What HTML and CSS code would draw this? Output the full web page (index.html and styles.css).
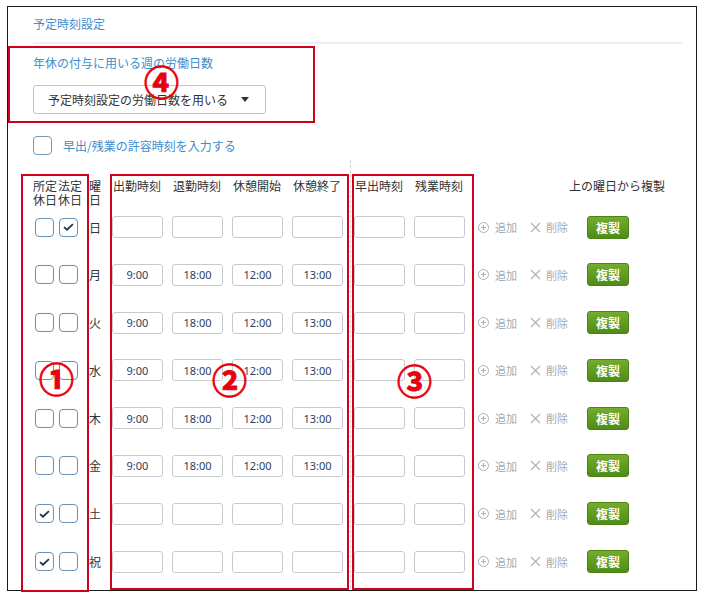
FILE: index.html
```html
<!DOCTYPE html>
<html lang="ja">
<head>
    <meta charset="UTF-8">
    <meta name="viewport" content="width=device-width, initial-scale=1.0">
    <title>予定時刻設定</title>
    <link rel="stylesheet" href="styles.css">
</head>
<body>
    <div class="page">
        <div class="frame">
            <section class="schedule">
                <h2 class="section-title">予定時刻設定</h2>

                <p class="field-label">年休の付与に用いる週の労働日数</p>
                <div class="select-box">
                    <span>予定時刻設定の労働日数を用いる</span>
                    <span class="caret"></span>
                </div>

                <label class="allow-check">
                    <span class="cb cb-large"></span>
                    <span>早出/残業の許容時刻を入力する</span>
                </label>

                <!-- Weekly schedule table -->
                <div class="week-table">
                    <div class="week-head">
                        <div class="c-off"><span class="head-wrap">所定休日</span></div>
                        <div class="c-legal"><span class="head-wrap">法定休日</span></div>
                        <div class="c-day"><span class="head-day">曜日</span></div>
                        <div class="c-time">出勤時刻</div>
                        <div class="c-time">退勤時刻</div>
                        <div class="c-time">休憩開始</div>
                        <div class="c-time">休憩終了</div>
                        <div class="c-time c-extra">早出時刻</div>
                        <div class="c-time">残業時刻</div>
                        <div class="c-copy">上の曜日から複製</div>
                    </div>

                    <div class="week-rows">
                        <div class="week-row">
                            <div class="c-off"><span class="cb"></span></div>
                            <div class="c-legal"><span class="cb checked"><svg width="11" height="8" viewBox="0 0 12 9"><path d="M1 4.6l3.3 3L11 1.2" fill="none" stroke="#243447" stroke-width="2"/></svg></span></div>
                            <div class="c-day">日</div>
                            <div class="c-time"><input type="text" value=""></div>
                            <div class="c-time"><input type="text" value=""></div>
                            <div class="c-time"><input type="text" value=""></div>
                            <div class="c-time"><input type="text" value=""></div>
                            <div class="c-time c-extra"><input type="text" value=""></div>
                            <div class="c-time"><input type="text" value=""></div>
                            <div class="actions">
                                <span class="act act-add"><svg width="11" height="11" viewBox="0 0 11 11"><circle cx="5.5" cy="5.5" r="5" fill="none" stroke="#a9b0b7"/><path d="M5.5 3v5M3 5.5h5" stroke="#a9b0b7"/></svg>追加</span>
                                <span class="act act-del"><svg width="11" height="11" viewBox="0 0 11 11"><path d="M1 1l9 9M10 1l-9 9" stroke="#a9b0b7" stroke-width="1.1"/></svg>削除</span>
                                <button class="copy-btn">複製</button>
                            </div>
                        </div>

                        <div class="week-row">
                            <div class="c-off"><span class="cb"></span></div>
                            <div class="c-legal"><span class="cb"></span></div>
                            <div class="c-day">月</div>
                            <div class="c-time"><input type="text" value="9:00"></div>
                            <div class="c-time"><input type="text" value="18:00"></div>
                            <div class="c-time"><input type="text" value="12:00"></div>
                            <div class="c-time"><input type="text" value="13:00"></div>
                            <div class="c-time c-extra"><input type="text" value=""></div>
                            <div class="c-time"><input type="text" value=""></div>
                            <div class="actions">
                                <span class="act act-add"><svg width="11" height="11" viewBox="0 0 11 11"><circle cx="5.5" cy="5.5" r="5" fill="none" stroke="#a9b0b7"/><path d="M5.5 3v5M3 5.5h5" stroke="#a9b0b7"/></svg>追加</span>
                                <span class="act act-del"><svg width="11" height="11" viewBox="0 0 11 11"><path d="M1 1l9 9M10 1l-9 9" stroke="#a9b0b7" stroke-width="1.1"/></svg>削除</span>
                                <button class="copy-btn">複製</button>
                            </div>
                        </div>

                        <div class="week-row">
                            <div class="c-off"><span class="cb"></span></div>
                            <div class="c-legal"><span class="cb"></span></div>
                            <div class="c-day">火</div>
                            <div class="c-time"><input type="text" value="9:00"></div>
                            <div class="c-time"><input type="text" value="18:00"></div>
                            <div class="c-time"><input type="text" value="12:00"></div>
                            <div class="c-time"><input type="text" value="13:00"></div>
                            <div class="c-time c-extra"><input type="text" value=""></div>
                            <div class="c-time"><input type="text" value=""></div>
                            <div class="actions">
                                <span class="act act-add"><svg width="11" height="11" viewBox="0 0 11 11"><circle cx="5.5" cy="5.5" r="5" fill="none" stroke="#a9b0b7"/><path d="M5.5 3v5M3 5.5h5" stroke="#a9b0b7"/></svg>追加</span>
                                <span class="act act-del"><svg width="11" height="11" viewBox="0 0 11 11"><path d="M1 1l9 9M10 1l-9 9" stroke="#a9b0b7" stroke-width="1.1"/></svg>削除</span>
                                <button class="copy-btn">複製</button>
                            </div>
                        </div>

                        <div class="week-row">
                            <div class="c-off"><span class="cb"></span></div>
                            <div class="c-legal"><span class="cb"></span></div>
                            <div class="c-day">水</div>
                            <div class="c-time"><input type="text" value="9:00"></div>
                            <div class="c-time"><input type="text" value="18:00"></div>
                            <div class="c-time"><input type="text" value="12:00"></div>
                            <div class="c-time"><input type="text" value="13:00"></div>
                            <div class="c-time c-extra"><input type="text" value=""></div>
                            <div class="c-time"><input type="text" value=""></div>
                            <div class="actions">
                                <span class="act act-add"><svg width="11" height="11" viewBox="0 0 11 11"><circle cx="5.5" cy="5.5" r="5" fill="none" stroke="#a9b0b7"/><path d="M5.5 3v5M3 5.5h5" stroke="#a9b0b7"/></svg>追加</span>
                                <span class="act act-del"><svg width="11" height="11" viewBox="0 0 11 11"><path d="M1 1l9 9M10 1l-9 9" stroke="#a9b0b7" stroke-width="1.1"/></svg>削除</span>
                                <button class="copy-btn">複製</button>
                            </div>
                        </div>

                        <div class="week-row">
                            <div class="c-off"><span class="cb"></span></div>
                            <div class="c-legal"><span class="cb"></span></div>
                            <div class="c-day">木</div>
                            <div class="c-time"><input type="text" value="9:00"></div>
                            <div class="c-time"><input type="text" value="18:00"></div>
                            <div class="c-time"><input type="text" value="12:00"></div>
                            <div class="c-time"><input type="text" value="13:00"></div>
                            <div class="c-time c-extra"><input type="text" value=""></div>
                            <div class="c-time"><input type="text" value=""></div>
                            <div class="actions">
                                <span class="act act-add"><svg width="11" height="11" viewBox="0 0 11 11"><circle cx="5.5" cy="5.5" r="5" fill="none" stroke="#a9b0b7"/><path d="M5.5 3v5M3 5.5h5" stroke="#a9b0b7"/></svg>追加</span>
                                <span class="act act-del"><svg width="11" height="11" viewBox="0 0 11 11"><path d="M1 1l9 9M10 1l-9 9" stroke="#a9b0b7" stroke-width="1.1"/></svg>削除</span>
                                <button class="copy-btn">複製</button>
                            </div>
                        </div>

                        <div class="week-row">
                            <div class="c-off"><span class="cb"></span></div>
                            <div class="c-legal"><span class="cb"></span></div>
                            <div class="c-day">金</div>
                            <div class="c-time"><input type="text" value="9:00"></div>
                            <div class="c-time"><input type="text" value="18:00"></div>
                            <div class="c-time"><input type="text" value="12:00"></div>
                            <div class="c-time"><input type="text" value="13:00"></div>
                            <div class="c-time c-extra"><input type="text" value=""></div>
                            <div class="c-time"><input type="text" value=""></div>
                            <div class="actions">
                                <span class="act act-add"><svg width="11" height="11" viewBox="0 0 11 11"><circle cx="5.5" cy="5.5" r="5" fill="none" stroke="#a9b0b7"/><path d="M5.5 3v5M3 5.5h5" stroke="#a9b0b7"/></svg>追加</span>
                                <span class="act act-del"><svg width="11" height="11" viewBox="0 0 11 11"><path d="M1 1l9 9M10 1l-9 9" stroke="#a9b0b7" stroke-width="1.1"/></svg>削除</span>
                                <button class="copy-btn">複製</button>
                            </div>
                        </div>

                        <div class="week-row">
                            <div class="c-off"><span class="cb checked"><svg width="11" height="8" viewBox="0 0 12 9"><path d="M1 4.6l3.3 3L11 1.2" fill="none" stroke="#243447" stroke-width="2"/></svg></span></div>
                            <div class="c-legal"><span class="cb"></span></div>
                            <div class="c-day">土</div>
                            <div class="c-time"><input type="text" value=""></div>
                            <div class="c-time"><input type="text" value=""></div>
                            <div class="c-time"><input type="text" value=""></div>
                            <div class="c-time"><input type="text" value=""></div>
                            <div class="c-time c-extra"><input type="text" value=""></div>
                            <div class="c-time"><input type="text" value=""></div>
                            <div class="actions">
                                <span class="act act-add"><svg width="11" height="11" viewBox="0 0 11 11"><circle cx="5.5" cy="5.5" r="5" fill="none" stroke="#a9b0b7"/><path d="M5.5 3v5M3 5.5h5" stroke="#a9b0b7"/></svg>追加</span>
                                <span class="act act-del"><svg width="11" height="11" viewBox="0 0 11 11"><path d="M1 1l9 9M10 1l-9 9" stroke="#a9b0b7" stroke-width="1.1"/></svg>削除</span>
                                <button class="copy-btn">複製</button>
                            </div>
                        </div>

                        <div class="week-row">
                            <div class="c-off"><span class="cb checked"><svg width="11" height="8" viewBox="0 0 12 9"><path d="M1 4.6l3.3 3L11 1.2" fill="none" stroke="#243447" stroke-width="2"/></svg></span></div>
                            <div class="c-legal"><span class="cb"></span></div>
                            <div class="c-day">祝</div>
                            <div class="c-time"><input type="text" value=""></div>
                            <div class="c-time"><input type="text" value=""></div>
                            <div class="c-time"><input type="text" value=""></div>
                            <div class="c-time"><input type="text" value=""></div>
                            <div class="c-time c-extra"><input type="text" value=""></div>
                            <div class="c-time"><input type="text" value=""></div>
                            <div class="actions">
                                <span class="act act-add"><svg width="11" height="11" viewBox="0 0 11 11"><circle cx="5.5" cy="5.5" r="5" fill="none" stroke="#a9b0b7"/><path d="M5.5 3v5M3 5.5h5" stroke="#a9b0b7"/></svg>追加</span>
                                <span class="act act-del"><svg width="11" height="11" viewBox="0 0 11 11"><path d="M1 1l9 9M10 1l-9 9" stroke="#a9b0b7" stroke-width="1.1"/></svg>削除</span>
                                <button class="copy-btn">複製</button>
                            </div>
                        </div>
                    </div>
                </div>
            </section>
        </div>

        <!-- Callout boxes and numbers drawn over the form -->
        <div class="mark mark-4"></div>
        <div class="mark mark-1"></div>
        <div class="mark mark-2"></div>
        <div class="mark mark-3"></div>
        <span class="num num-4">④</span>
        <span class="num num-1">①</span>
        <span class="num num-2">②</span>
        <span class="num num-3">③</span>
    </div>
</body>
</html>
```

FILE: styles.css
```css
/* Reset */
* {
    margin: 0;
    padding: 0;
    box-sizing: border-box;
}

body {
    font-family: "Noto Sans CJK JP", "Noto Sans", sans-serif;
    background: #fff;
    color: #333;
}

.page {
    position: relative;
    width: 705px;
    height: 600px;
    overflow: hidden;
}

.frame {
    margin: 6px 0 0 7px;
    width: 690px;
    height: 585px;
    border: 1px solid #1a1a1a;
    padding-left: 25px;
    overflow: hidden;
}

.schedule {
    width: 649px;
}

.section-title {
    font-size: 12px;
    font-weight: normal;
    line-height: 18px;
    color: #3d8dcc;
    padding: 8px 0 9px;
    border-bottom: 2px solid #eceff3;
}

.field-label {
    margin-top: 10px;
    font-size: 12px;
    line-height: 18px;
    color: #3d8dcc;
}

.select-box {
    margin-top: 13px;
    width: 233px;
    height: 29px;
    border: 1px solid #b9c6d3;
    border-radius: 3px;
    display: flex;
    align-items: center;
    padding-left: 14px;
    font-size: 12px;
    color: #333;
}

.caret {
    margin-left: auto;
    margin-right: 16px;
    border-top: 5px solid #333;
    border-left: 4.5px solid transparent;
    border-right: 4.5px solid transparent;
}

.allow-check {
    margin-top: 22px;
    display: flex;
    align-items: center;
    gap: 11px;
    height: 19px;
    font-size: 12px;
    color: #3d8dcc;
}

/* Checkboxes */
.cb {
    display: flex;
    align-items: center;
    justify-content: center;
    width: 19px;
    height: 19px;
    border: 1.6px solid #6b91b3;
    border-radius: 4px;
    background: #fff;
}

.cb-large {
    border-color: #7597b8;
}

/* Week table */
.week-table {
    margin-top: 24px;
    position: relative;
}

.week-table::before {
    content: "";
    position: absolute;
    left: 317px;
    top: -19px;
    bottom: -20px;
    border-left: 1px dashed #cfd2d5;
}

.week-head {
    display: flex;
    font-size: 12px;
    line-height: 14px;
    color: #333;
    height: 28px;
}

.head-wrap {
    display: block;
    width: 25px;
}

.head-day {
    display: block;
    width: 12px;
}

.week-rows {
    margin-top: 9px;
    display: flex;
    flex-direction: column;
    gap: 25.8px;
}

.week-row {
    display: flex;
    align-items: center;
    height: 22px;
}

.c-off {
    width: 25px;
    flex: none;
}

.c-legal {
    width: 31px;
    flex: none;
}

.c-day {
    width: 23px;
    flex: none;
    font-size: 12px;
    color: #333;
}

.week-row .c-off .cb {
    margin-left: 2px;
}

.week-row .c-legal .cb {
    margin-left: 1px;
}

.c-time {
    width: 60px;
    flex: none;
}

.week-head .c-time {
    padding-left: 1px;
}

.c-extra {
    margin-left: 2px;
}

.c-copy {
    margin-left: 95px;
    white-space: nowrap;
}

.c-time input {
    display: block;
    width: 51px;
    height: 22px;
    border: 1px solid #c6cacf;
    border-radius: 3px;
    text-align: center;
    font-family: "Noto Sans", sans-serif;
    font-size: 11px;
    color: #2c3e5a;
    outline: none;
}

/* Row actions */
.actions {
    display: flex;
    align-items: center;
    padding-left: 4px;
}

.act {
    display: flex;
    align-items: center;
    font-size: 11px;
    color: #a3aab1;
}

.act-add svg {
    margin-right: 6px;
}

.act-del {
    margin-left: 13px;
}

.act-del svg {
    margin-right: 5px;
}

.copy-btn {
    margin-left: 19px;
    width: 42px;
    height: 23px;
    border: 1px solid #4c8218;
    border-radius: 3px;
    background: linear-gradient(#74ad2d, #4f8c16);
    color: #fff;
    font-family: inherit;
    font-size: 12px;
    font-weight: bold;
}

/* Callouts */
.mark {
    position: absolute;
    border: 2px solid #d0021b;
}

.mark-4 {
    left: 8px;
    top: 46px;
    width: 307px;
    height: 77px;
}

.mark-1 {
    left: 21px;
    top: 174px;
    width: 68px;
    height: 418px;
}

.mark-2 {
    left: 110px;
    top: 174px;
    width: 239px;
    height: 416px;
}

.mark-3 {
    left: 352px;
    top: 174px;
    width: 122px;
    height: 416px;
}

.num {
    position: absolute;
    color: #e8000e;
    font-size: 35px;
    font-weight: bold;
    line-height: 35px;
    -webkit-text-stroke: 0.9px #e8000e;
}

.num-4 { left: 144px; top: 63px; }
.num-1 { left: 39px; top: 360px; }
.num-2 { left: 212px; top: 361px; }
.num-3 { left: 397px; top: 362px; }
```
